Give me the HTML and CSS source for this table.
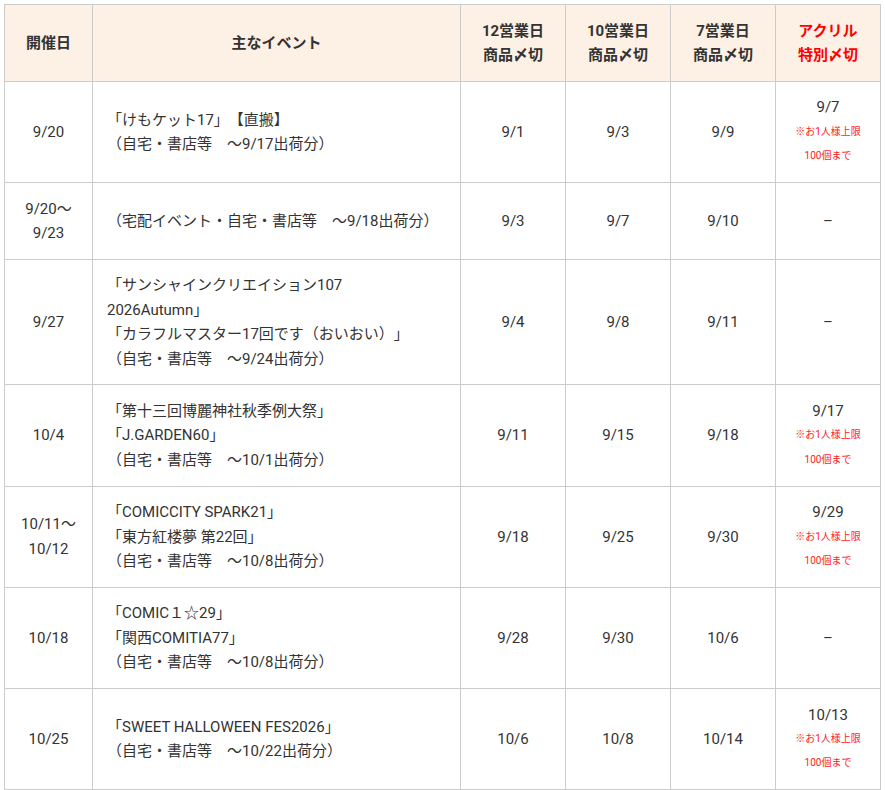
FILE: index.html
```html
<!DOCTYPE html>
<html lang="ja">
<head>
<meta charset="utf-8">
<link rel="stylesheet" href="styles.css">
</head>
<body>
<table class="sched">
  <colgroup>
    <col class="c-date"><col class="c-event"><col class="c-d"><col class="c-d"><col class="c-d"><col class="c-d">
  </colgroup>
  <thead>
    <tr>
      <th>開催日</th>
      <th>主なイベント</th>
      <th>12営業日<br>商品〆切</th>
      <th>10営業日<br>商品〆切</th>
      <th>7営業日<br>商品〆切</th>
      <th class="red">アクリル<br>特別〆切</th>
    </tr>
  </thead>
  <tbody>
    <tr>
      <td>9/20</td>
      <td class="ev">「けもケット17」【直搬】<br>（自宅・書店等　～9/17出荷分）</td>
      <td>9/1</td><td>9/3</td><td>9/9</td>
      <td>9/7<span class="note">※お1人様上限</span><span class="note">100個まで</span></td>
    </tr>
    <tr>
      <td>9/20～<br>9/23</td>
      <td class="ev">（宅配イベント・自宅・書店等　～9/18出荷分）</td>
      <td>9/3</td><td>9/7</td><td>9/10</td>
      <td>–</td>
    </tr>
    <tr>
      <td>9/27</td>
      <td class="ev">「サンシャインクリエイション107<br>2026Autumn」<br>「カラフルマスター17回です（おいおい）」<br>（自宅・書店等　～9/24出荷分）</td>
      <td>9/4</td><td>9/8</td><td>9/11</td>
      <td>–</td>
    </tr>
    <tr>
      <td>10/4</td>
      <td class="ev">「第十三回博麗神社秋季例大祭」<br>「J.GARDEN60」<br>（自宅・書店等　～10/1出荷分）</td>
      <td>9/11</td><td>9/15</td><td>9/18</td>
      <td>9/17<span class="note">※お1人様上限</span><span class="note">100個まで</span></td>
    </tr>
    <tr>
      <td>10/11～<br>10/12</td>
      <td class="ev">「COMICCITY SPARK21」<br>「東方紅楼夢 第22回」<br>（自宅・書店等　～10/8出荷分）</td>
      <td>9/18</td><td>9/25</td><td>9/30</td>
      <td>9/29<span class="note">※お1人様上限</span><span class="note">100個まで</span></td>
    </tr>
    <tr>
      <td>10/18</td>
      <td class="ev">「COMIC１☆29」<br>「関西COMITIA77」<br>（自宅・書店等　～10/8出荷分）</td>
      <td>9/28</td><td>9/30</td><td>10/6</td>
      <td>–</td>
    </tr>
    <tr>
      <td>10/25</td>
      <td class="ev">「SWEET HALLOWEEN FES2026」<br>（自宅・書店等　～10/22出荷分）</td>
      <td>10/6</td><td>10/8</td><td>10/14</td>
      <td>10/13<span class="note">※お1人様上限</span><span class="note">100個まで</span></td>
    </tr>
  </tbody>
</table>
</body>
</html>
```

FILE: styles.css
```css
html, body {
  margin: 0;
  padding: 0;
  background: #fff;
}
body {
  padding: 4px;
  font-family: Roboto, "Noto Sans CJK JP", sans-serif;
  font-size: 15px;
  color: #333;
  text-spacing-trim: space-all;
}
.sched {
  border-collapse: collapse;
  table-layout: fixed;
  width: 877px;
}
.c-date { width: 88px; }
.c-event { width: 368px; }
.c-d { width: 105px; }
.sched th,
.sched td {
  border: 1px solid #ccc;
  padding: 13.5px 14px;
  line-height: 24.4px;
  text-align: center;
  vertical-align: middle;
}
.sched th {
  background: #fdf0e5;
  font-weight: bold;
  color: #333;
}
.sched th.red {
  color: #ff0000;
}
.sched td.ev {
  text-align: left;
}
.note {
  display: block;
  font-size: 10px;
  line-height: 24.4px;
  color: #ff1a1a;
}
```
